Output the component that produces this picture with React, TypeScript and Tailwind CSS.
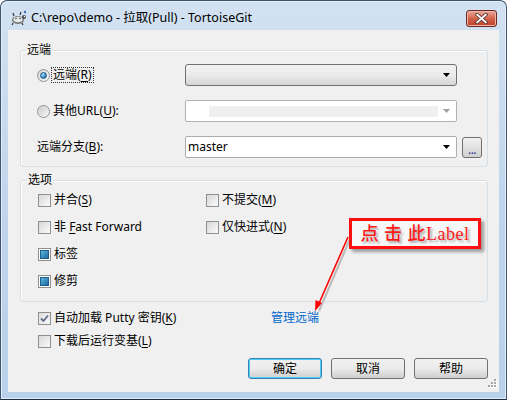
import React from 'react';

const ui = { fontFamily: '"Segoe UI", "Noto Sans", "Noto Sans CJK SC", sans-serif' };

function U({ children }: { children: React.ReactNode }) {
  return <span className="underline underline-offset-[2px] decoration-[1px]">{children}</span>;
}

function Radio({ on }: { on?: boolean }) {
  return (
    <span className="w-[13px] h-[13px] shrink-0 rounded-full border border-[#8e9297] bg-linear-to-br from-[#d4d4d4] to-[#fafafa] flex items-center justify-center">
      {on ? (
        <span className="w-[7px] h-[7px] rounded-full border border-[#1c5a8a] bg-radial-[at_35%_30%] from-[#b8e4fb] via-[#3d9ad2] to-[#124f85]" />
      ) : (
        <span className="w-[9px] h-[9px] rounded-full bg-linear-to-br from-[#cfcfcf] to-[#f4f4f4]" />
      )}
    </span>
  );
}

function Check({ state }: { state?: 'on' | 'mixed' }) {
  return (
    <span className="w-[13px] h-[13px] shrink-0 border border-[#8f8f8f] bg-white flex items-center justify-center">
      {state === 'mixed' ? (
        <span className="w-[9px] h-[9px] border border-[#1d5c87] bg-linear-to-br from-[#5cb6e2] to-[#1b6aa2]" />
      ) : state === 'on' ? (
        <span className="w-[11px] h-[11px] bg-linear-to-br from-[#dedede] to-[#f8f8f8] flex items-center justify-center">
          <svg width="9" height="9" viewBox="0 0 9 9">
            <path d="M1 4.5 L3.5 7 L8 1.5" fill="none" stroke="#5f6f8a" strokeWidth="1.8" />
          </svg>
        </span>
      ) : (
        <span className="w-[11px] h-[11px] bg-linear-to-br from-[#d7d7d7] to-[#fbfbfb]" />
      )}
    </span>
  );
}

function Arrow({ color = '#000' }: { color?: string }) {
  return (
    <svg width="7" height="4" viewBox="0 0 7 4" className="shrink-0">
      <path d="M0 0 H7 L3.5 4 Z" fill={color} />
    </svg>
  );
}

function Btn({ label, main }: { label: string; main?: boolean }) {
  return (
    <div
      className={
        'w-[74px] h-[21px] rounded-[3px] flex items-center justify-center text-[12px] text-black bg-linear-to-b from-[#f2f2f2] via-[#ebebeb] to-[#cfcfcf] ' +
        (main ? 'border border-[#3c7fb1] shadow-[inset_0_0_0_1px_#48d1f8]' : 'border border-[#707070]')
      }
    >
      {label}
    </div>
  );
}

export default function App() {
  return (
    <div className="w-[507px] h-[400px] bg-white overflow-hidden relative" style={ui}>
      <div className="w-full h-full flex flex-col rounded-t-[7px] border border-[#3d5572] border-b-[#1c2d3e] bg-linear-to-b from-[#d3e2f2] via-[#c0d5ec] to-[#b9d1ea] shadow-[inset_0_0_0_1px_#e6eef8]">
        {/* title bar */}
        <div className="h-[29px] shrink-0 pt-[5px] pl-[9px] pr-[9px] flex items-center">
          <svg width="17" height="16" viewBox="0 0 17 16" className="shrink-0">
            <ellipse cx="8" cy="10" rx="6" ry="4" fill="#7a7a7a" />
            <ellipse cx="8" cy="9.5" rx="4.5" ry="2.8" fill="#e8e8e8" />
            <path d="M5 9 L7 8 M9 8 L11 9" stroke="#555" strokeWidth="1" />
            <circle cx="14" cy="7" r="2" fill="#4a4a4a" />
            <circle cx="14.5" cy="6.5" r="0.7" fill="#fff" />
            <path d="M3 13 L2 15 M12 13 L13 15 M4 6 L3 3 M10 5 L11 2" stroke="#333" strokeWidth="1.2" />
            <circle cx="15" cy="2" r="1.2" fill="#3a6fb0" />
          </svg>
          <span className="ml-[4px] text-[12.5px] text-black whitespace-nowrap">C:\repo\demo - 拉取(Pull) - TortoiseGit</span>
          <div className="ml-auto w-[31px] h-[17px] rounded-[3px] border border-[#6a2a22] bg-linear-to-b from-[#e9a99b] via-[#d2634c] to-[#c0402a] shadow-[inset_0_0_0_1px_#f0b3a5] flex items-center justify-center">
            <svg width="13" height="11" viewBox="0 0 13 11">
              <path d="M2 1.5 L11 9.5 M11 1.5 L2 9.5" stroke="#4a2a26" strokeWidth="3.4" strokeLinecap="round" />
              <path d="M2 1.5 L11 9.5 M11 1.5 L2 9.5" stroke="#ffffff" strokeWidth="1.8" strokeLinecap="round" />
            </svg>
          </div>
        </div>

        {/* client */}
        <div className="mx-[7px] h-[362px] shrink-0 bg-[#f0f0f0] text-[12px] text-black flex flex-col relative">
          <fieldset className="mt-[12px] ml-[12px] mr-[11px] border border-[#d5dfe5] rounded-[3px] p-0 shadow-[inset_1px_1px_0_#fff]">
            <legend className="ml-[5px] px-[1px] leading-[16px]">远端</legend>
            <div className="pt-[6px] pb-[8px] pl-[16px] flex flex-col gap-[14px]">
              <div className="h-[22px] flex items-center">
                <div className="w-[148px] flex items-center">
                  <Radio on />
                  <span className="ml-[2px] px-[1px] leading-[14px] outline outline-1 outline-dotted outline-[#333]">
                    远端(<U>R</U>)
                  </span>
                </div>
                <div className="w-[272px] h-[22px] rounded-[3px] border border-[#707070] bg-linear-to-b from-[#f2f2f2] via-[#ebebeb] to-[#d6d6d6] flex items-center justify-end pr-[6px]">
                  <Arrow />
                </div>
              </div>
              <div className="h-[22px] flex items-center">
                <div className="w-[148px] flex items-center">
                  <Radio />
                  <span className="ml-[3px]">
                    其他URL(<U>U</U>):
                  </span>
                </div>
                <div className="w-[272px] h-[22px] rounded-[2px] border border-[#adb2b5] bg-white flex items-center pl-[23px] pr-[6px]">
                  <div className="w-[229px] h-[11px] bg-[#efefef]" />
                  <div className="ml-auto">
                    <Arrow color="#a0a0a0" />
                  </div>
                </div>
              </div>
              <div className="h-[22px] flex items-center">
                <div className="w-[148px]">
                  远端分支(<U>B</U>):
                </div>
                <div className="w-[272px] h-[22px] rounded-[2px] border border-[#abadb3] bg-white flex items-center pl-[2px] pr-[6px]">
                  <span>master</span>
                  <div className="ml-auto">
                    <Arrow />
                  </div>
                </div>
                <div className="ml-[5px] w-[20px] h-[21px] rounded-[3px] border border-[#707070] bg-linear-to-b from-[#f2f2f2] to-[#d0d0d0] flex items-end justify-center pb-[4px]">
                  <span className="text-[#2b2b8c] leading-[6px] tracking-[-0.5px]">...</span>
                </div>
              </div>
            </div>
          </fieldset>

          <fieldset className="mt-[5px] ml-[12px] mr-[11px] border border-[#d5dfe5] rounded-[3px] p-0 shadow-[inset_1px_1px_0_#fff]">
            <legend className="ml-[6px] px-[1px] leading-[16px]">选项</legend>
            <div className="pb-[8px] pl-[17px] grid grid-cols-[168px_1fr] auto-rows-[24px] gap-y-[3px]">
              <div className="flex items-center">
                <Check />
                <span className="ml-[3px]">
                  并合(<U>S</U>)
                </span>
              </div>
              <div className="flex items-center">
                <Check />
                <span className="ml-[3px]">
                  不提交(<U>M</U>)
                </span>
              </div>
              <div className="flex items-center">
                <Check />
                <span className="ml-[3px]">
                  非 <U>F</U>ast Forward
                </span>
              </div>
              <div className="flex items-center">
                <Check />
                <span className="ml-[3px]">
                  仅快进式(<U>N</U>)
                </span>
              </div>
              <div className="flex items-center col-span-2">
                <Check state="mixed" />
                <span className="ml-[3px]">标签</span>
              </div>
              <div className="flex items-center col-span-2">
                <Check state="mixed" />
                <span className="ml-[3px]">修剪</span>
              </div>
            </div>
          </fieldset>

          <div className="mt-[6px] pl-[30px] h-[20px] flex items-center">
            <div className="w-[233px] flex items-center">
              <Check state="on" />
              <span className="ml-[3px]">
                自动加载 Putty 密钥(<U>K</U>)
              </span>
            </div>
            <span className="text-[#0066cc]">管理远端</span>
          </div>
          <div className="mt-[3px] pl-[30px] h-[20px] flex items-center">
            <Check />
            <span className="ml-[3px]">
              下载后运行变基(<U>L</U>)
            </span>
          </div>

          <div className="mt-[7px] pr-[11px] flex justify-end gap-[9px]">
            <Btn label="确定" main />
            <Btn label="取消" />
            <Btn label="帮助" />
          </div>

          {/* size grip */}
          <svg width="11" height="11" viewBox="0 0 11 11" className="absolute right-[2px] bottom-[2px]">
            {[
              [8, 0],
              [5, 3],
              [8, 3],
              [2, 6],
              [5, 6],
              [8, 6],
            ].map(([x, y]) => (
              <g key={`${x}-${y}`}>
                <rect x={x + 1} y={y + 1} width="2" height="2" fill="#fff" />
                <rect x={x} y={y} width="2" height="2" fill="#a7a7a7" />
              </g>
            ))}
          </svg>
        </div>
      </div>

      {/* annotation */}
      <svg width="507" height="400" className="absolute left-0 top-0 pointer-events-none">
        <line x1="350" y1="239" x2="319" y2="311" stroke="#bbb" strokeWidth="2" />
        <line x1="348" y1="237" x2="317" y2="308" stroke="#ff0000" strokeWidth="1.6" />
        <path d="M315 311 L315.5 300 L322 303 Z" fill="#ff0000" />
      </svg>
      <div className="absolute left-[349px] top-[218px] w-[132px] h-[31px] border-[3px] border-[#ff1010] bg-[#f7f7f7] shadow-[3px_3px_3px_rgba(0,0,0,0.35)] flex items-center justify-center">
        <span
          className="text-[18px] font-medium text-[#ff1a1a] whitespace-nowrap leading-none tracking-[0.5px] [text-shadow:2px_2px_2px_rgba(0,0,0,0.3)]"
          style={{ fontFamily: '"Liberation Serif", "Noto Sans CJK SC", serif' }}
        >
          点 击 此Label
        </span>
      </div>
    </div>
  );
}
